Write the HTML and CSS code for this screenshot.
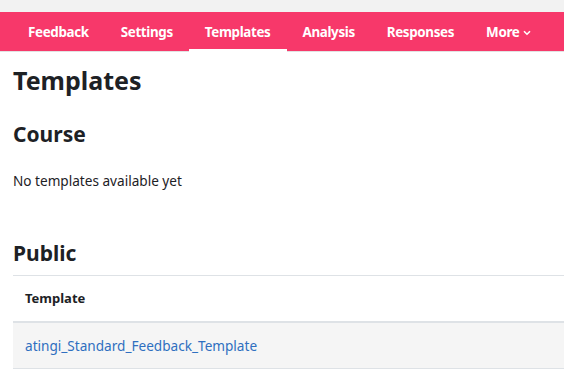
FILE: index.html
```html
<!DOCTYPE html>
<html>
<head>
<meta charset="utf-8">
<link rel="stylesheet" href="styles.css">
</head>
<body>
<div class="topstrip"></div>
<nav class="nav">
  <a class="nav-item">Feedback</a>
  <a class="nav-item">Settings</a>
  <a class="nav-item active">Templates</a>
  <a class="nav-item">Analysis</a>
  <a class="nav-item">Responses</a>
  <a class="nav-item">More <svg class="chev" width="8" height="6" viewBox="0 0 8 6"><path d="M1 1.2 L4 4.2 L7 1.2" fill="none" stroke="#fff" stroke-width="1.6"/></svg></a>
</nav>
<main class="main">
  <h1 class="h1">Templates</h1>
  <h2 class="h2">Course</h2>
  <p class="empty">No templates available yet</p>
  <h2 class="h2 public">Public</h2>
  <table class="table">
    <thead><tr><th>Template</th></tr></thead>
    <tbody><tr><td><a class="link">atingi_Standard_Feedback_Template</a></td></tr></tbody>
  </table>
</main>
</body>
</html>
```
FILE: styles.css
```css
* { box-sizing: border-box; }
html, body { margin: 0; padding: 0; background: #fff; }
body { font-family: "Noto Sans", "Open Sans", sans-serif; color: #1d2125; overflow: hidden; }
.topstrip { height: 12px; background: #f2f2f2; }
.nav { display: flex; height: 40px; background: #f7386a; padding-left: 12px; border-bottom: 1px solid #e2e2e2; }
.nav-item { display: flex; align-items: center; padding: 0 16px; color: #fff; font-weight: 700; font-size: 13.4px; letter-spacing: -0.35px; position: relative; }
.nav-item.active::after { content: ""; position: absolute; left: 0; right: 0; bottom: -1px; height: 3px; background: #fff; }
.chev { margin-left: 4px; margin-top: 2px; }
.main { padding-left: 13px; }
.h1 { margin: 0; padding-top: 12px; font-size: 25px; font-weight: 700; line-height: 32px; }
.h2 { margin: 0; margin-top: 24px; font-size: 21px; font-weight: 700; line-height: 28px; }
.empty { margin: 0; margin-top: 24px; font-size: 13.6px; line-height: 18px; }
.public { margin-top: 49px; }
.table { width: calc(100% + 1px); border-collapse: collapse; margin-top: 8px; font-size: 13px; }
.table th { text-align: left; padding: 0 12px; height: 46px; border-top: 1px solid #dee2e6; border-bottom: 2px solid #dee2e6; font-weight: 700; }
.table td { padding: 0 12px; height: 47px; background: #f5f5f5; border-bottom: 1px solid #dee2e6; }
.link { color: #2f6fc0; font-size: 13.6px; }
```
